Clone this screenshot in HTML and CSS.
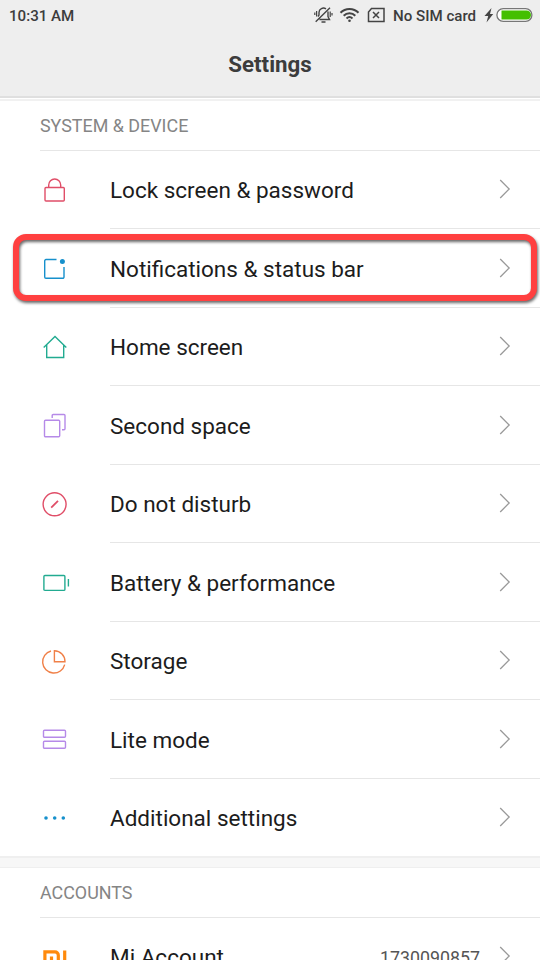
FILE: index.html
```html
<!DOCTYPE html>
<html lang="en">
<head>
<meta charset="utf-8">
<title>Settings</title>
<link rel="stylesheet" href="styles.css">
</head>
<body>
<svg class="defs" width="0" height="0"><symbol id="chevron" viewBox="0 0 12 22"><path d="M1.2 2L10.2 11L1.2 20" fill="none" stroke="#999" stroke-width="1.3"/></symbol></svg>
<header class="header">
  <div class="status">
    <span class="time">10:31 AM</span>
    <svg class="status-icons" width="76" height="24" viewBox="0 0 76 24" fill="none" stroke="#444" stroke-width="1.5">
      <path d="M4 16.500l1-1.500V12.500a4.500 4.500 0 0 1 7-3.700M14 11.500V16.500l1.500 3H5.500M7.500 22h4M1.700 21.700L16 7.700" stroke-width="1.400"/>
      <path d="M2.600 11v5.500M.8 12.500v2.500M16.200 11.500v5.500M18 13v2.500" stroke-width="1.200"/>
      <path d="M26.500 12.800a12.500 12.500 0 0 1 18 0M29.700 15.700a8 8 0 0 1 11.600 0M32.500 18.400a4.500 4.500 0 0 1 6 0" stroke-width="2"/>
      <circle cx="35.500" cy="20.800" r="1.300" fill="#444" stroke="none"/>
      <path d="M57.500 8.500H70V21.500H54.500V12zM59 12l6 6M65 12l-6 6"/>
    </svg>
    <span class="sim">No SIM card</span>
    <svg class="battery" width="50" height="24" viewBox="0 0 50 24">
      <path d="M7.500 8L.5 16h3.700L2.500 22.500l6.700-8.500H6z" fill="#444"/>
      <rect x="12.900" y="8.700" width="35" height="12.600" rx="6.300" fill="#fff" stroke="#777" stroke-width="1.300"/>
      <path d="M17.500 10.500h25a4.500 4.500 0 0 1 0 9h-25z" fill="#44bf00"/>
    </svg>
  </div>
  <h1 class="title">Settings</h1>
</header>
<main>
  <h2 class="section">SYSTEM &amp; DEVICE</h2>
  <div class="list">
    <div class="row"><svg class="icon red" viewBox="0 0 30 30"><rect x="5" y="12.500" width="19.300" height="13.500" rx="1"/><path d="M8.700 12.500V10a6 6 0 0 1 12 0v2.500"/></svg><span class="label">Lock screen &amp; password</span><svg class="chevron"><use href="#chevron"/></svg></div>
    <div class="row"><svg class="icon blue" viewBox="0 0 30 30"><path d="M16.500 6.500H6a1.300 1.300 0 0 0-1.300 1.300V24A1.300 1.300 0 0 0 6 25.300H22.700A1.300 1.300 0 0 0 24 24V14"/><circle class="solid" cx="22.400" cy="8.400" r="2.500"/></svg><span class="label">Notifications &amp; status bar</span><svg class="chevron"><use href="#chevron"/></svg><div class="highlight"></div></div>
    <div class="row"><svg class="icon green" viewBox="0 0 30 30"><path d="M3.700 15.600L15 4.600L26.300 15.600M6.700 13V25.500H23.700V13"/></svg><span class="label">Home screen</span><svg class="chevron"><use href="#chevron"/></svg></div>
    <div class="row"><svg class="icon purple" viewBox="0 0 30 30"><rect x="4.500" y="10.300" width="15.200" height="16.400" rx="1"/><path d="M12.200 8V5.500a1 1 0 0 1 1-1H24a1 1 0 0 1 1 1V18.700a1 1 0 0 1-1 1H22"/></svg><span class="label">Second space</span><svg class="chevron"><use href="#chevron"/></svg></div>
    <div class="row"><svg class="icon red" viewBox="0 0 30 30"><circle cx="14.600" cy="15.300" r="11.500"/><path d="M11.200 18.700L18 11.900" stroke-width="1.800"/></svg><span class="label">Do not disturb</span><svg class="chevron"><use href="#chevron"/></svg></div>
    <div class="row"><svg class="icon green" viewBox="0 0 30 30"><rect x="3.900" y="8.500" width="21" height="14.900" rx="1"/><path d="M28.400 12v7.500"/></svg><span class="label">Battery &amp; performance</span><svg class="chevron"><use href="#chevron"/></svg></div>
    <div class="row"><svg class="icon orange" viewBox="0 0 30 30"><path d="M11 5A11.200 11.200 0 1 0 24.700 18.600M14.400 4.800V15.800H25A10.800 10.800 0 0 0 14.400 4.800z"/></svg><span class="label">Storage</span><svg class="chevron"><use href="#chevron"/></svg></div>
    <div class="row"><svg class="icon purple" viewBox="0 0 30 30"><rect x="3.500" y="6.200" width="22" height="7" rx="1"/><rect x="3.500" y="17.200" width="22" height="7" rx="1"/></svg><span class="label">Lite mode</span><svg class="chevron"><use href="#chevron"/></svg></div>
    <div class="row"><svg class="icon blue" viewBox="0 0 30 30"><g class="solid"><circle cx="6" cy="15" r="1.800"/><circle cx="14.700" cy="15" r="1.800"/><circle cx="23.300" cy="15" r="1.800"/></g></svg><span class="label">Additional settings</span><svg class="chevron"><use href="#chevron"/></svg></div>
  </div>
  <div class="gap"></div>
  <h2 class="section">ACCOUNTS</h2>
  <div class="list">
    <div class="row"><svg class="icon mi" viewBox="0 0 30 30"><path d="M4.900 24V9.900H15a3.300 3.300 0 0 1 3.300 3.300V24M11.500 14.500v10M24.700 8.400V24"/></svg><span class="label">Mi Account</span><span class="value">1730090857</span><svg class="chevron"><use href="#chevron"/></svg></div>
  </div>
</main>
</body>
</html>
```
FILE: styles.css
```css
* { box-sizing: border-box; }
html, body { margin: 0; height: 960px; overflow: hidden; }
body { width: 540px; background: #fff; font-family: Roboto, "Liberation Sans", sans-serif; color: #1c1c1c; }
.defs { display: block; }
.header { height: 98px; background: #eee; border-bottom: 2px solid #dfdfdf; }
.status { height: 30px; display: flex; align-items: center; padding: 0 6px 0 9px; font-size: 15.1px; font-weight: 500; color: #3c3c3c; white-space: nowrap; }
.time { flex: 1; }
.time, .sim { padding-top: 1px; }
.status-icons { margin: -7px 3px 0 0; }
.sim { width: 87px; }
.status-icons, .battery { flex: none; }
.battery { margin: -6px 0 0 4px; }
.title { margin: 16px 0 0; font-size: 22.3px; line-height: 37px; font-weight: 700; text-align: center; color: #3c3c3c; }
main { border-top: 2px solid #f1f1f1; margin-top: 1px; }
.section { margin: 0 0 0 40px; height: 50px; border-bottom: 1px solid #e6e6e6; font-size: 17.9px; font-weight: 400; line-height: 50px; color: #858585; }
.list { margin-top: -0.5px; }
.row { position: relative; display: flex; align-items: center; height: 78.5px; padding: 0 29px 0 40px; }
.row + .row::before { content: ""; position: absolute; left: 110px; right: 0; top: -0.7px; height: 1px; background: #e6e6e6; }
.icon { width: 30px; height: 30px; flex: none; margin-right: 40px; fill: none; stroke: currentColor; stroke-width: 1.4; }
.solid { fill: currentColor; stroke: none; }
.red { color: #e04e68; }
.blue { color: #1690cc; }
.green { color: #22ab91; }
.purple { color: #b68ae8; }
.orange { color: #f08048; }
.mi { color: #ff8a0c; stroke-width: 3.2; }
.label { flex: 1; margin-top: 1px; font-size: 22.5px; line-height: 30px; white-space: nowrap; }
.value { margin: 1px 19px 0 0; font-size: 17.8px; color: #555; }
.chevron { width: 12px; height: 22px; flex: none; margin-top: -1.4px; }
.highlight { position: absolute; left: 12.5px; right: 3px; top: 5px; height: 67px; border: 6px solid #ff4040; border-radius: 13px; filter: drop-shadow(1px 2px 1.5px rgba(0, 0, 0, .6)); }
.gap { height: 12px; margin-top: -1px; background: #f7f7f7; border: solid #efefef; border-width: 2px 0 1px; }
```
